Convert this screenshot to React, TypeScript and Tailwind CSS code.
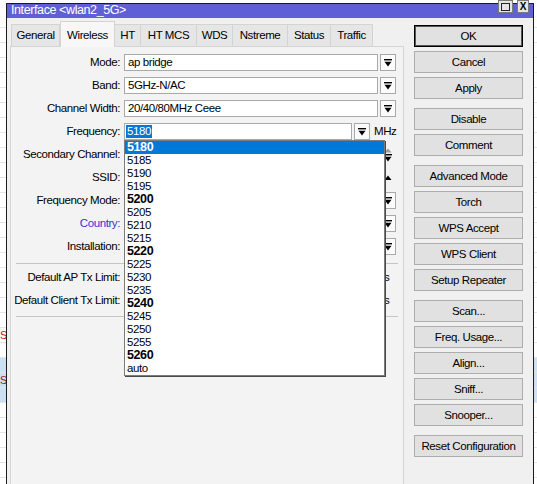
import React from 'react';

const tabs = [
  { name: 'General', w: 'w-[49px]' },
  { name: 'Wireless', w: 'w-[55px]', active: true },
  { name: 'HT', w: 'w-[27px]' },
  { name: 'HT MCS', w: 'w-[57px]' },
  { name: 'WDS', w: 'w-[37px]' },
  { name: 'Nstreme', w: 'w-[56px]' },
  { name: 'Status', w: 'w-[44px]' },
  { name: 'Traffic', w: 'w-[43px]' },
];

// button groups, gap between groups is a bit larger
const buttonGroups = [
  ['OK', 'Cancel', 'Apply'],
  ['Disable', 'Comment'],
  ['Advanced Mode', 'Torch', 'WPS Accept', 'WPS Client', 'Setup Repeater'],
  ['Scan...', 'Freq. Usage...', 'Align...', 'Sniff...', 'Snooper...'],
  ['Reset Configuration'],
];

const freqs = [
  '5180', '5185', '5190', '5195', '5200', '5205', '5210', '5215', '5220',
  '5225', '5230', '5235', '5240', '5245', '5250', '5255', '5260', 'auto',
];

const DropIcon = () => (
  <svg width="8" height="8" viewBox="0 0 8 8">
    <rect x="0" y="0" width="8" height="1.4" fill="#000" />
    <path d="M0.5 2.8h7L4 7.6z" fill="#000" />
  </svg>
);

const DropButton = () => (
  <div className="ml-[2px] flex h-[17px] w-[16px] shrink-0 items-center justify-center border border-[#a9a9a9] bg-[#fbfbfb]">
    <DropIcon />
  </div>
);

const Label = ({ text, blue }: { text: string; blue?: boolean }) => (
  <div className={`w-[109px] shrink-0 text-right leading-[17px] ${blue ? 'text-[#3434d4]' : 'text-black'}`}>{text}</div>
);

const Field = ({ value, w = 'w-[254px]' }: { value?: string; w?: string }) => (
  <div className={`ml-[4px] h-[17px] shrink-0 border border-[#a9a9a9] bg-white pl-[3px] leading-[15px] ${w}`}>{value}</div>
);

const App = () => {
  const bgRows = Array.from({ length: 32 }, (_, i) => i);

  return (
    <div className="relative h-[484px] w-[537px] overflow-hidden bg-white font-['Liberation_Sans',Arial,sans-serif] text-[11.5px] tracking-[-0.4px] text-black">
      {/* table of the window behind */}
      <div className="flex flex-col pt-[13px]">
        {bgRows.map((i) => (
          <div
            key={i}
            className={`flex h-[15px] items-center border-b border-[#e4e4e4] ${i >= 23 && i <= 25 ? 'bg-[#cddff3]' : ''}`}
          >
            {i === 21 && <span className="text-[11px] leading-none text-[#c01818]">S</span>}
            {i === 24 && <span className="text-[11px] leading-none text-[#a02020]">S</span>}
          </div>
        ))}
      </div>

      {/* the dialog */}
      <div className="absolute left-[6px] top-[3px] flex h-[500px] w-[528px] flex-col border border-[#1c1c1c] bg-[#f0f0f0]">
        <div className="h-[14px] overflow-hidden bg-[#5f5fd6] pl-[4px] text-[12.5px] leading-[13px] text-white">
          Interface &lt;wlan2_5G&gt;
        </div>

        <div className="absolute left-[491px] top-[-4px] flex gap-[4px]">
          <div className="flex h-[13px] w-[15px] items-center justify-center border border-[#7a7a7a] bg-[#e4e4e4]">
            <div className="h-[8px] w-[9px] border border-[#222]" />
          </div>
          <div className="flex h-[13px] w-[12px] items-center justify-center border border-[#7a7a7a] bg-[#e4e4e4] text-[10px] font-bold leading-none">
            X
          </div>
        </div>

        <div className="flex flex-1 pl-[3px] pt-[3px]">
          {/* tabs + panel */}
          <div className="flex w-[394px] flex-col">
            <div className="flex h-[25px] items-end pl-[2px]">
              {tabs.map((t) =>
                t.active ? (
                  <div
                    key={t.name}
                    className={`relative z-10 -mb-px flex h-[26px] items-start justify-center border border-b-0 border-[#d4d4d4] bg-[#f7f7f7] pt-[5px] ${t.w}`}
                  >
                    {t.name}
                  </div>
                ) : (
                  <div
                    key={t.name}
                    className={`-ml-px flex h-[22px] items-center justify-center border border-b-0 border-[#d4d4d4] bg-[#e6e6e6] pt-[1px] ${t.w}`}
                  >
                    {t.name}
                  </div>
                )
              )}
            </div>

            <div className="flex-1 border border-[#d4d4d4] bg-[#f3f3f3] pt-[7px]">
              <div className="flex flex-col gap-[6px]">
                <div className="flex h-[17px] items-center">
                  <Label text="Mode:" />
                  <Field value="ap bridge" />
                  <DropButton />
                </div>
                <div className="flex h-[17px] items-center">
                  <Label text="Band:" />
                  <Field value="5GHz-N/AC" />
                  <DropButton />
                </div>
                <div className="flex h-[17px] items-center">
                  <Label text="Channel Width:" />
                  <Field value="20/40/80MHz Ceee" />
                  <DropButton />
                </div>
                <div className="flex h-[17px] items-center">
                  <Label text="Frequency:" />
                  <div className="ml-[4px] h-[17px] w-[228px] shrink-0 border border-[#a9a9a9] bg-white pl-[1px] pt-px leading-[13px]">
                    <span className="inline-block bg-[#0078d7] px-[1px] text-white">5180</span>
                  </div>
                  <DropButton />
                  <span className="ml-[4px] leading-[17px]">MHz</span>
                </div>
                <div className="flex h-[17px] items-center">
                  <Label text="Secondary Channel:" />
                  <Field />
                  <div className="ml-[2px] flex h-[17px] w-[16px] flex-col items-center justify-center gap-[1px]">
                    <svg width="8" height="5" viewBox="0 0 8 5">
                      <path d="M0.5 4.5h7L4 0.5z" fill="#9a9a9a" />
                    </svg>
                    <DropIcon />
                  </div>
                </div>
                <div className="flex h-[17px] items-center">
                  <Label text="SSID:" />
                  <Field />
                  <div className="ml-[2px] flex h-[17px] w-[16px] items-center justify-center">
                    <svg width="8" height="6" viewBox="0 0 8 6">
                      <path d="M0.5 5h7L4 0.5z" fill="#000" />
                    </svg>
                  </div>
                </div>
                <div className="flex h-[17px] items-center">
                  <Label text="Frequency Mode:" />
                  <Field />
                  <DropButton />
                </div>
                <div className="flex h-[17px] items-center">
                  <Label text="Country:" blue />
                  <Field />
                  <DropButton />
                </div>
                <div className="flex h-[17px] items-center">
                  <Label text="Installation:" />
                  <Field />
                  <DropButton />
                </div>
              </div>

              <div className="mx-[5px] mt-[8px] h-px bg-[#c6c6c6]" />

              <div className="mt-[5px] flex flex-col gap-[6px]">
                <div className="flex h-[17px] items-center">
                  <Label text="Default AP Tx Limit:" />
                  <Field w="w-[245px]" />
                  <span className="ml-[3px] leading-[17px]">bps</span>
                </div>
                <div className="flex h-[17px] items-center">
                  <Label text="Default Client Tx Limit:" />
                  <Field w="w-[245px]" />
                  <span className="ml-[3px] leading-[17px]">bps</span>
                </div>
              </div>

              <div className="mx-[5px] mt-[7px] h-px bg-[#c6c6c6]" />
            </div>
          </div>

          {/* buttons */}
          <div className="ml-[10px] flex w-[109px] flex-col gap-[9px] pt-[4px]">
            {buttonGroups.map((group, gi) => (
              <div key={gi} className="flex flex-col gap-[4px]">
                {group.map((b) => (
                  <div
                    key={b}
                    className={`flex h-[22px] items-center justify-center bg-[#e1e1e1] pt-px ${
                      b === 'OK'
                        ? 'border border-black shadow-[inset_0_0_0_1px_#555]'
                        : 'border border-[#adadad]'
                    }`}
                  >
                    {b}
                  </div>
                ))}
              </div>
            ))}
          </div>
        </div>
      </div>

      {/* open frequency list */}
      <div className="absolute left-[124px] top-[140px] w-[261px] border border-[#7c7c7c] bg-white shadow-[1px_1px_0_#4a4a4a]">
        {freqs.map((f, i) => {
          const bold = f !== 'auto' && Number(f) % 20 === 0;
          return (
            <div
              key={f}
              className={`h-[13px] pl-[2px] leading-[13px] ${i === 0 ? 'bg-[#0078d7] text-white' : 'text-black'} ${
                bold ? 'text-[12.5px] font-bold' : 'text-[11.5px]'
              }`}
            >
              {f}
            </div>
          );
        })}
      </div>
    </div>
  );
};

export default App;
